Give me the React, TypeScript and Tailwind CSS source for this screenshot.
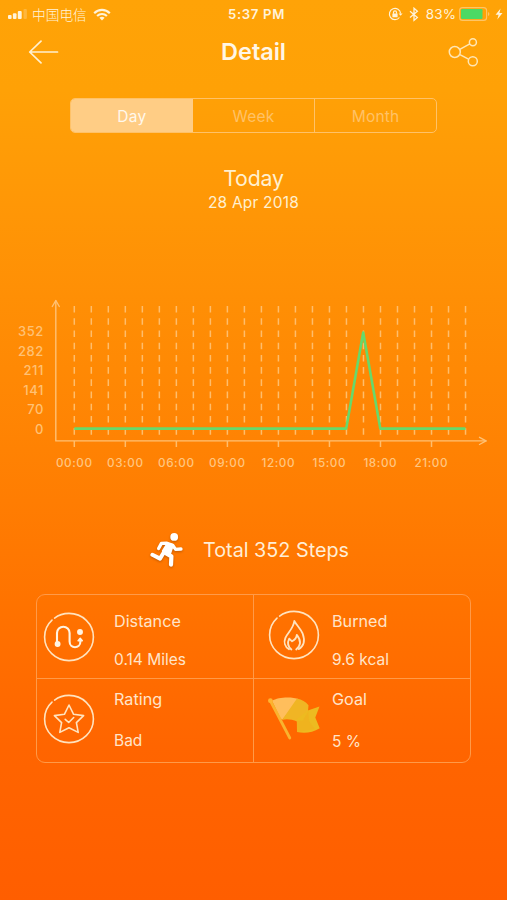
import React from "react";

const HOURS = Array.from({ length: 24 }, (_, i) => 74.3 + i * 17.01);
const X_LABELS = ["00:00", "03:00", "06:00", "09:00", "12:00", "15:00", "18:00", "21:00"];
const Y_LABELS = ["352", "282", "211", "141", "70", "0"];

function StatusBar() {
  return (
    <div className="grid h-7 grid-cols-[1fr_auto_1fr] items-center pl-2 pr-1 text-[#fff3da]">
      <div className="flex items-center">
        <svg width="20" height="12" viewBox="0 0 20 12" fill="currentColor">
          <rect x="0" y="7" width="3.6" height="4" rx="1" />
          <rect x="4.9" y="5.2" width="3.6" height="5.8" rx="1" />
          <rect x="9.8" y="3" width="3.9" height="8" rx="1" />
          <rect x="15.5" y="1" width="3.4" height="10" rx="1" opacity="0.25" />
        </svg>
        <span className="ml-1 font-['Noto_Sans_CJK_SC',sans-serif] text-[13.7px] leading-4 font-light">中国电信</span>
        <svg className="ml-1.5" width="18" height="13" viewBox="0 0 18 13" fill="none" stroke="currentColor" strokeWidth="2.1">
          <path d="M1.2 5.2C5.6 .7 12.4 .7 16.8 5.2" />
          <path d="M4.1 8.1c2.8-2.8 7-2.8 9.8 0" />
          <path d="M9 12.4 6.4 9.8c1.5-1.3 3.7-1.3 5.2 0Z" fill="currentColor" stroke="none" />
        </svg>
      </div>
      <div className="pl-0.5 text-[13.2px] leading-4 font-semibold tracking-[0.65px]">5:37 PM</div>
      <div className="flex items-center justify-end">
        <svg width="15" height="14" viewBox="0 0 15 14" fill="none" stroke="currentColor" strokeWidth="1.2">
          <path d="M11.4 10.5A5.6 5.6 0 1 1 12.6 6.5" />
          <path d="m10.6 6.4 2 2.3 2-2.3Z" fill="currentColor" stroke="none" />
          <rect x="4.4" y="6.4" width="5.2" height="3.8" rx=".5" fill="currentColor" stroke="none" />
          <path d="M5.5 6.7V5.4a1.5 1.5 0 0 1 3 0v1.3" />
        </svg>
        <svg className="ml-1.5" width="10" height="15" viewBox="0 0 10 15" fill="none" stroke="currentColor" strokeWidth="1.3">
          <path d="m1 4.2 7.4 6.2L5 13.4V1.2l3.4 3L1 10.4" />
        </svg>
        <span className="ml-[7px] text-[13.5px] leading-4 tracking-[0.1px]">83%</span>
        <svg className="ml-[3px]" width="31" height="14" viewBox="0 0 31 14" fill="none">
          <rect x=".6" y=".6" width="27" height="12.8" rx="3" stroke="#ffc566" strokeWidth="1.1" />
          <rect x="2" y="2" width="21.5" height="10" rx="1.2" fill="#4cd964" />
          <path d="M29 5v4q1.4-.4 1.4-2T29 5Z" fill="#ffc566" />
        </svg>
        <svg className="ml-[5px]" width="8" height="12" viewBox="0 0 8 12" fill="currentColor">
          <path d="M5.6.5.6 6.7h3L2.3 11.5l5.2-6.4H4.4Z" />
        </svg>
      </div>
    </div>
  );
}

function NavBar() {
  return (
    <header className="grid h-[47px] grid-cols-[1fr_auto_1fr] items-center px-7 text-[#fff6e6]">
      <svg width="32" height="24" viewBox="0 0 32 24" fill="none" stroke="#fff0cf" strokeWidth="1.7" strokeLinecap="round" strokeLinejoin="round">
        <path d="M29.5 12H1.7M13 1.2 1.7 12 13 22.8" />
      </svg>
      <h1 className="text-[23.5px] leading-7 font-semibold tracking-[-0.05px]">Detail</h1>
      <svg className="mt-px justify-self-end" width="32" height="30" viewBox="3.5 0 32 30" fill="none" stroke="#ffe6b5" strokeWidth="1.5">
        <circle cx="11.3" cy="15" r="5.5" />
        <circle cx="29.4" cy="5.2" r="3.5" />
        <circle cx="29.3" cy="24.2" r="4.5" />
        <path d="m16.3 12.3 10-5.4M16.4 17.6l8.6 4.5" />
      </svg>
    </header>
  );
}

function Segments() {
  return (
    <div className="mx-auto mt-[23px] grid h-[35px] w-[367px] grid-cols-3 overflow-hidden rounded-[5px] border-[1.5px] border-[#ffc268] text-center text-[15.5px] leading-[35px] tracking-[0.2px] text-[#ffc266]">
      <div className="bg-[#ffcd85] text-[#fff8ec]">Day</div>
      <div>Week</div>
      <div className="border-l border-[#ffc268]">Month</div>
    </div>
  );
}

function StepsChart() {
  return (
    <svg className="mt-[75px] block" width="507" height="190" viewBox="0 290 507 190" fill="none">
      <g stroke="#ffbd6b" strokeWidth="1.5">
        {HOURS.map((x) => (
          <path key={x} d={`M${x} 306v129`} strokeDasharray="6.6 5.62" />
        ))}
        {HOURS.filter((_, i) => i % 3 === 0).map((x) => (
          <path key={x} d={`M${x} 441v6`} />
        ))}
      </g>
      <g stroke="#ffc174" strokeWidth="1.4" strokeLinejoin="round" strokeLinecap="round">
        <path d="M55.8 300.8v140.1H486" />
        <path d="m52.3 306.5 3.5-6 3.5 6M479.5 437.3l6.5 3.6-6.5 3.6" />
      </g>
      <path d="M74.3 428.6H346.2L363.2 332.5 380.3 428.6H465.5" stroke="#67d96b" strokeWidth="2.6" strokeLinejoin="round" />
      <g fill="#ffc174" fontSize="13" fontWeight="500" textAnchor="end" letterSpacing="0.5">
        {Y_LABELS.map((label, i) => (
          <text key={label} x="43.8" y={336.3 + i * 19.5}>{label}</text>
        ))}
      </g>
      <g fill="#ffc680" fontSize="11.7" fontWeight="500" textAnchor="middle" letterSpacing="0.6">
        {X_LABELS.map((label, i) => (
          <text key={label} x={74.3 + i * 51} y="466.8">{label}</text>
        ))}
      </g>
    </svg>
  );
}

function Total() {
  return (
    <div className="mt-[50px] flex h-10 items-center pl-[149px] text-[#ffeed6]">
      <svg className="drop-shadow-[0_1px_1px_rgba(120,50,0,0.45)]" width="36" height="36" viewBox="0 0 36 36" fill="none" stroke="#fff" strokeLinecap="round" strokeLinejoin="round">
        <circle cx="25.2" cy="4.9" r="3.9" fill="#fff" stroke="none" />
        <path d="M18.4 11.5 13.8 19 20.6 23.2 24 13Z" fill="#fff" strokeWidth="2" />
        <path d="M9.6 16.5 12.4 11.4 18 11.2 23.7 13.3 26.6 17.4 32 17" strokeWidth="3.3" />
        <path d="M15 20.2 22.4 24.4 22 32.6" strokeWidth="4.2" />
        <path d="m14.3 21.2-3.3 5.4L3.4 22.8" strokeWidth="4" />
      </svg>
      <span className="ml-[18px] text-[19.8px] leading-6">Total 352 Steps</span>
    </div>
  );
}

function RingIcon({ children }: { children: React.ReactNode }) {
  return (
    <svg width="52" height="50" viewBox="0 0 52 50" fill="none" stroke="#ffe3bf" strokeWidth="1.6" strokeLinecap="round" strokeLinejoin="round">
      <path d="M11.6 6.1C16 2.6 20.5 1.4 26 1.4c13.6 0 24.4 10.6 24.4 23.6S39.6 48.6 26 48.6 1.6 38 1.6 25C1.6 18.4 4.6 12.1 9 8.1" />
      {children}
    </svg>
  );
}

function DistanceIcon() {
  return (
    <RingIcon>
      <g stroke="#fff3e2" strokeWidth="2.1">
        <path d="M14 31V21a6.3 6.3 0 0 1 12.6 0v8.5c0 7.6 10.8 7.6 10.8 0v-1" />
        <circle cx="14.6" cy="32" r="1.9" fill="#fff3e2" />
        <circle cx="37" cy="20" r="1.9" fill="#fff3e2" />
        <path d="m37.2 26.2-2.1 2.5h4.2Z" fill="#fff3e2" strokeWidth="1.5" />
      </g>
    </RingIcon>
  );
}

function StarIcon() {
  return (
    <RingIcon>
      <path d="m26 11 4.6 9.3 10 1.3-7.2 7 1.8 9.8L26 33.8l-9.2 4.6 1.8-9.8-7.2-7 10-1.3Z" />
      <path d="m22.2 25.3 3.5 3.2 5-5" />
    </RingIcon>
  );
}

function FlameIcon() {
  return (
    <RingIcon>
      <path strokeWidth="1.8" d="M21 39.3c-4.2-2.6-5.3-7.2-3.7-11.2C19.4 22.6 25.4 19 26.3 11c2.6 4.6 6.4 7.7 8.4 12.7 2.4 6.6 1.3 12.3-4.1 15.4" />
      <path strokeWidth="1.8" d="M23.4 39.5c-3.3-2.8-4.1-7.1-2.2-10.9l2.9 2.7c2.6-1.3 4.4-3.4 4.7-6.4 4 5 4.4 10.3-.6 14.6" />
    </RingIcon>
  );
}

function FlagIcon() {
  return (
    <svg width="54" height="46" viewBox="0 0 54 46" fill="none">
      <path d="M5 4.8C11 .8 25 .4 32 3.2L15.5 23.5 13.5 22.5Z" fill="#ffbe5c" />
      <path d="M30 2.6c5 1.2 8.5 3.2 11.5 6.6l-1 12-10.5 4.3c-5-2.2-10.5-2.8-15-1.6Z" fill="#f0b524" />
      <path d="M29.8 23 40.8 14.5l11.7-3.9-4.2 11 4.4 10.6c-7.3 4.5-15.2 5.3-22.7 3.7Z" fill="#edba20" />
      <path d="m36 24.5 5.2-9.5 1 10.5L48 33l-18 3V25Z" fill="#f0b01e" opacity=".7" />
      <path d="M4 6 22.8 42" stroke="#f9b32e" strokeWidth="2.8" strokeLinecap="round" />
      <circle cx="3.4" cy="4.7" r="2.4" fill="#ffb431" />
    </svg>
  );
}

interface StatProps {
  icon: React.ReactNode;
  label: string;
  value: string;
  iconBox: string;
  textBox: string;
}

function Stat({ icon, label, value, iconBox, textBox }: StatProps) {
  return (
    <div className="flex items-start text-[#ffe5ca]">
      <div className={iconBox}>{icon}</div>
      <div className={`flex flex-col text-[16.2px] leading-5 ${textBox}`}>
        <span>{label}</span>
        <span className="text-[15.5px]">{value}</span>
      </div>
    </div>
  );
}

export default function App() {
  return (
    <main className="h-[900px] w-[507px] overflow-hidden bg-[linear-gradient(180deg,#ffa307_0%,#ffa106_10%,#ff9606_24%,#ff8203_50%,#ff7300_67%,#ff6500_83%,#ff5e00_100%)] font-['Inter',sans-serif]">
      <StatusBar />
      <NavBar />
      <Segments />
      <section className="flex flex-col items-center pt-[33px] text-[#fff0d0]">
        <h2 className="text-[21.3px] leading-6 tracking-[-0.2px]">Today</h2>
        <p className="mt-px text-[15.5px] leading-6 tracking-[0.2px]">28 Apr 2018</p>
      </section>
      <StepsChart />
      <Total />
      <section className="mt-6 ml-9 grid h-[169px] w-[435px] grid-cols-[217px_1fr] grid-rows-[84px_1fr] rounded-[9px] border border-[#ff9a48]">
        <div className="border-r border-b border-[#ff9a48]">
          <Stat icon={<DistanceIcon />} label="Distance" value="0.14 Miles" iconBox="mt-[17px] ml-[6px]" textBox="mt-4 ml-[19px] gap-[19px]" />
        </div>
        <div className="border-b border-[#ff9a48]">
          <Stat icon={<FlameIcon />} label="Burned" value="9.6 kcal" iconBox="mt-[15px] ml-[14px]" textBox="mt-4 ml-[12px] gap-[19px]" />
        </div>
        <div className="border-r border-[#ff9a48]">
          <Stat icon={<StarIcon />} label="Rating" value="Bad" iconBox="mt-[15px] ml-[6px]" textBox="mt-[10px] ml-[19px] gap-[22px]" />
        </div>
        <div>
          <Stat icon={<FlagIcon />} label="Goal" value="5 %" iconBox="mt-[17px] ml-[13px]" textBox="mt-[10px] ml-[11px] gap-[23px]" />
        </div>
      </section>
    </main>
  );
}
